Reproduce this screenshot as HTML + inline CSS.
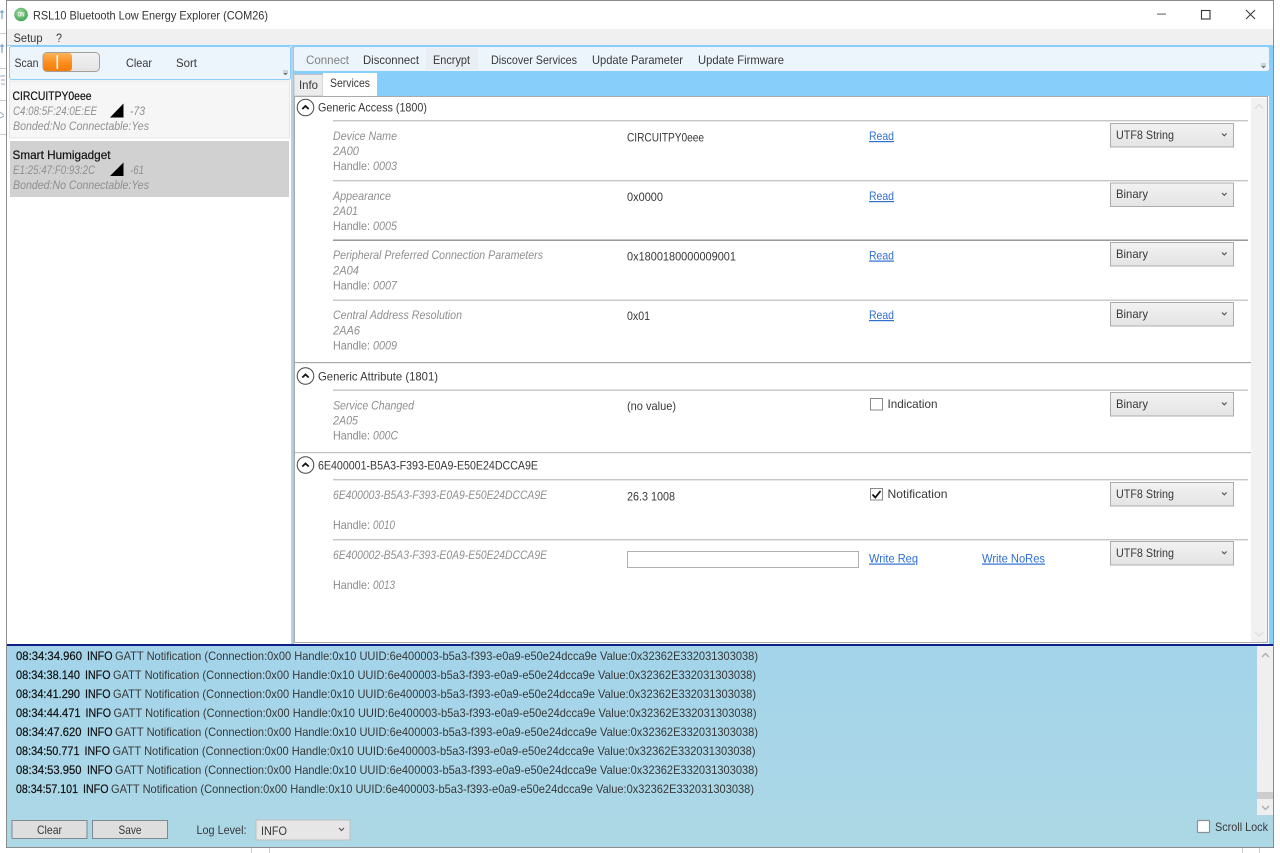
<!DOCTYPE html>
<html><head><meta charset="utf-8"><title>RSL10 Bluetooth Low Energy Explorer (COM26)</title>
<style>
html,body{margin:0;padding:0;background:#fff;width:1280px;height:853px;overflow:hidden}
svg{display:block}
text{font-family:"Liberation Sans",sans-serif;font-size:12px;fill:#2b2b2b}
.g{fill:#8a8a8a}
.i{fill:#8f8f8f;font-style:italic}
.d{fill:#383838}
.b{fill:#111;stroke:#111;stroke-width:.2}
.l{fill:#2f6fd0;text-decoration:underline}
</style></head><body>
<svg width="1280" height="853" viewBox="0 0 1280 853" xmlns="http://www.w3.org/2000/svg">
<defs>
<linearGradient id="og" x1="0" y1="0" x2="0" y2="1"><stop offset="0" stop-color="#fdb35a"/><stop offset=".55" stop-color="#fb8c1c"/><stop offset="1" stop-color="#f57c0a"/></linearGradient>
<linearGradient id="gr" x1="0" y1="0" x2="0" y2="1"><stop offset="0" stop-color="#f2f2f2"/><stop offset="1" stop-color="#e4e4e4"/></linearGradient>
<linearGradient id="lg" x1="0" y1="0" x2="0" y2="1"><stop offset="0" stop-color="#a3d4ea"/><stop offset="1" stop-color="#add8e6"/></linearGradient>
<radialGradient id="on" cx=".4" cy=".35" r=".7"><stop offset="0" stop-color="#9ad6a0"/><stop offset="1" stop-color="#3fa34d"/></radialGradient>
<symbol id="cb" viewBox="0 0 124 25" width="124" height="25"><rect x=".5" y=".5" width="123" height="23.500" fill="url(#gr)" stroke="#acacac"/><path d="M112 10.500l2.300 2.300 2.300-2.300" fill="none" stroke="#555" stroke-width="1.200"/></symbol>
<symbol id="ex" viewBox="0 0 20 20" width="20" height="20"><circle cx="10" cy="10" r="8.300" fill="#fff" stroke="#444" stroke-width="1"/><path d="M6.800 11.500L10 8.500l3.200 3" fill="none" stroke="#111" stroke-width="1.800"/></symbol>
</defs>

<!-- desktop behind -->
<rect width="1280" height="853" fill="#fff"/>
<rect x="0" y="33" width="6" height="1" fill="#ccc"/><rect x="0" y="68" width="6" height="1" fill="#ccc"/><rect x="0" y="100" width="6" height="1" fill="#ccc"/><rect x="0" y="134" width="6" height="1" fill="#ccc"/>
<path d="M0 12h4M2 10v9M0 46h4M2 44v9" stroke="#5a8fc4" fill="none"/>
<path d="M0 76h5M1 80h4M1 84h4M0 112l4 3M0 118l4-2" stroke="#9ab" fill="none"/>
<rect x="251" y="847" width="1" height="6" fill="#ccc"/><rect x="269" y="847" width="1" height="6" fill="#ccc"/><rect x="1242" y="847" width="1" height="6" fill="#ccc"/><rect x="1259" y="847" width="1" height="6" fill="#ccc"/>

<!-- window -->
<rect x="6.500" y=".5" width="1267" height="847" fill="#fff" stroke="#8c8c8c"/>
<rect x="7" y="1" width="1266" height="28" fill="#fff"/>
<circle cx="21" cy="14.500" r="6.800" fill="url(#on)"/>
<text x="17.500" y="16.500" textLength="7" lengthAdjust="spacingAndGlyphs" style="fill:#fff;font-size:6px;font-weight:bold">ON</text>
<text x="33" y="19.500" textLength="235" lengthAdjust="spacingAndGlyphs" style="fill:#333">RSL10 Bluetooth Low Energy Explorer (COM26)</text>
<rect x="1157" y="13.500" width="9" height="1.200" fill="#777"/>
<rect x="1201.500" y="10.500" width="8.500" height="8.500" fill="none" stroke="#333" stroke-width="1.100"/>
<path d="M1246 10l9 9M1255 10l-9 9" stroke="#333" stroke-width="1" fill="none"/>

<rect x="7" y="29" width="1266" height="16" fill="#f0f0f0"/>
<text x="13.500" y="42" textLength="29" lengthAdjust="spacingAndGlyphs" class="d">Setup</text>
<text x="56" y="42" textLength="6" lengthAdjust="spacingAndGlyphs" class="d">?</text>

<!-- blue region -->
<rect x="7" y="45" width="1266" height="600" fill="#88cefa"/>
<rect x="7" y="46" width="284" height="599" fill="#fff"/>
<rect x="291" y="46" width="2" height="599" fill="#b5d3e6"/>

<!-- left toolbar -->
<rect x="9.500" y="46.500" width="281" height="33" rx="2" fill="#ecf4fc" stroke="#8ccdf9"/>
<text x="14.500" y="67" textLength="24" lengthAdjust="spacingAndGlyphs" class="d">Scan</text>
<rect x="43" y="52.500" width="56.500" height="19" rx="4" fill="url(#gr)" stroke="#a59f97"/>
<rect x="43.500" y="53" width="28.500" height="18" rx="3" fill="url(#og)"/>
<rect x="56.500" y="55" width="1.600" height="14" fill="#fff"/>
<text x="126" y="67" textLength="26" lengthAdjust="spacingAndGlyphs" class="d">Clear</text>
<text x="176" y="67" textLength="21" lengthAdjust="spacingAndGlyphs" class="d">Sort</text>
<path d="M283 71h5M283.500 73h4l-2 2z" fill="#777" stroke="#777" stroke-width=".6"/>

<!-- list -->
<rect x="9.500" y="81" width="280" height="57" fill="#f6f6f6" stroke="#e6e6e6"/>
<rect x="10" y="141" width="279" height="56" fill="#d1d1d1"/>
<text x="12.500" y="100" textLength="79" lengthAdjust="spacingAndGlyphs" class="b">CIRCUITPY0eee</text>
<text x="13" y="115" textLength="84" lengthAdjust="spacingAndGlyphs" class="i">C4:08:5F:24:0E:EE</text>
<path d="M110 117.500L123.500 103.500V117.500Z" fill="#000"/>
<text x="130" y="115" textLength="15" lengthAdjust="spacingAndGlyphs" class="i">-73</text>
<text x="13" y="130" textLength="136" lengthAdjust="spacingAndGlyphs" class="i">Bonded:No Connectable:Yes</text>
<text x="12.500" y="159" textLength="98" lengthAdjust="spacingAndGlyphs" class="b">Smart Humigadget</text>
<text x="13" y="174" textLength="82" lengthAdjust="spacingAndGlyphs" class="i">E1:25:47:F0:93:2C</text>
<path d="M110 176L123.500 162.500V176Z" fill="#000"/>
<text x="130" y="174" textLength="14" lengthAdjust="spacingAndGlyphs" class="i">-61</text>
<text x="13" y="189" textLength="136" lengthAdjust="spacingAndGlyphs" class="i">Bonded:No Connectable:Yes</text>

<!-- right toolbar -->
<rect x="294" y="47" width="975" height="24" rx="2" fill="#ecf4fc"/>
<rect x="426" y="48" width="52" height="22" fill="#e8eef4"/>
<text x="306" y="64" textLength="43" lengthAdjust="spacingAndGlyphs" style="fill:#808080">Connect</text>
<text x="363" y="64" textLength="56" lengthAdjust="spacingAndGlyphs" class="d">Disconnect</text>
<text x="433" y="64" textLength="37" lengthAdjust="spacingAndGlyphs" class="d">Encrypt</text>
<text x="491" y="64" textLength="86" lengthAdjust="spacingAndGlyphs" class="d">Discover Services</text>
<text x="592" y="64" textLength="91" lengthAdjust="spacingAndGlyphs" class="d">Update Parameter</text>
<text x="698" y="64" textLength="86" lengthAdjust="spacingAndGlyphs" class="d">Update Firmware</text>
<path d="M1261 64h5M1261.500 66h4l-2 2z" fill="#777" stroke="#777" stroke-width=".6"/>

<!-- tabs -->
<rect x="294" y="74.500" width="29" height="21.500" fill="#ececec" stroke="#c2c2c2"/>
<text x="299" y="89" textLength="19" lengthAdjust="spacingAndGlyphs" class="d">Info</text>
<rect x="323" y="73" width="54" height="24" fill="#fff"/>
<text x="330" y="87" textLength="40" lengthAdjust="spacingAndGlyphs" class="d">Services</text>

<!-- content -->
<rect x="294" y="96" width="975" height="548" fill="#fff"/>
<rect x="1251" y="98" width="16" height="544" fill="#f1f1f1"/>
<rect x="294.500" y="96.500" width="973" height="546" fill="none" stroke="#555" stroke-dasharray="1 1"/>
<path d="M1255 108.500l4-4 4 4" stroke="#dcdcdc" fill="none" stroke-width="1.200"/>
<path d="M1255 632l4 4 4-4" stroke="#dcdcdc" fill="none" stroke-width="1.200"/>

<use href="#ex" x="295.500" y="97.500"/>
<text x="318" y="111.500" textLength="109" lengthAdjust="spacingAndGlyphs" class="d">Generic Access (1800)</text>
<rect x="333" y="120" width="915" height="1.400" fill="#c6c6c6"/>
<text x="333" y="140" textLength="64" lengthAdjust="spacingAndGlyphs" class="i">Device Name</text>
<text x="333" y="155" textLength="26" lengthAdjust="spacingAndGlyphs" class="i">2A00</text>
<text x="333" y="170" textLength="37" lengthAdjust="spacingAndGlyphs" class="g">Handle:</text><text x="373" y="170" textLength="24" lengthAdjust="spacingAndGlyphs" class="i">0003</text>
<text x="627" y="141.500" textLength="77" lengthAdjust="spacingAndGlyphs" class="d">CIRCUITPY0eee</text>
<text x="869" y="140" textLength="25" lengthAdjust="spacingAndGlyphs" class="l">Read</text>
<use href="#cb" x="1110" y="123"/><text x="1116" y="139" textLength="58" lengthAdjust="spacingAndGlyphs" class="d">UTF8 String</text>

<rect x="333" y="180" width="915" height="1.400" fill="#c6c6c6"/>
<text x="333" y="200" textLength="58" lengthAdjust="spacingAndGlyphs" class="i">Appearance</text>
<text x="333" y="215" textLength="25" lengthAdjust="spacingAndGlyphs" class="i">2A01</text>
<text x="333" y="230" textLength="37" lengthAdjust="spacingAndGlyphs" class="g">Handle:</text><text x="373" y="230" textLength="24" lengthAdjust="spacingAndGlyphs" class="i">0005</text>
<text x="627" y="201" textLength="36" lengthAdjust="spacingAndGlyphs" class="d">0x0000</text>
<text x="869" y="200" textLength="25" lengthAdjust="spacingAndGlyphs" class="l">Read</text>
<use href="#cb" x="1110" y="182.500"/><text x="1116" y="198" textLength="32" lengthAdjust="spacingAndGlyphs" class="d">Binary</text>

<rect x="333" y="239.500" width="915" height="1.400" fill="#8f8f8f"/>
<text x="333" y="259" textLength="210" lengthAdjust="spacingAndGlyphs" class="i">Peripheral Preferred Connection Parameters</text>
<text x="333" y="274.500" textLength="26" lengthAdjust="spacingAndGlyphs" class="i">2A04</text>
<text x="333" y="289.500" textLength="37" lengthAdjust="spacingAndGlyphs" class="g">Handle:</text><text x="373" y="289.500" textLength="24" lengthAdjust="spacingAndGlyphs" class="i">0007</text>
<text x="627" y="260.500" textLength="109" lengthAdjust="spacingAndGlyphs" class="d">0x1800180000009001</text>
<text x="869" y="259.500" textLength="25" lengthAdjust="spacingAndGlyphs" class="l">Read</text>
<use href="#cb" x="1110" y="242"/><text x="1116" y="258" textLength="32" lengthAdjust="spacingAndGlyphs" class="d">Binary</text>

<rect x="333" y="299.500" width="915" height="1.400" fill="#c6c6c6"/>
<text x="333" y="319" textLength="129" lengthAdjust="spacingAndGlyphs" class="i">Central Address Resolution</text>
<text x="333" y="334.500" textLength="27" lengthAdjust="spacingAndGlyphs" class="i">2AA6</text>
<text x="333" y="349.500" textLength="37" lengthAdjust="spacingAndGlyphs" class="g">Handle:</text><text x="373" y="349.500" textLength="24" lengthAdjust="spacingAndGlyphs" class="i">0009</text>
<text x="627" y="320" textLength="23" lengthAdjust="spacingAndGlyphs" class="d">0x01</text>
<text x="869" y="319" textLength="25" lengthAdjust="spacingAndGlyphs" class="l">Read</text>
<use href="#cb" x="1110" y="302"/><text x="1116" y="318" textLength="32" lengthAdjust="spacingAndGlyphs" class="d">Binary</text>

<rect x="295" y="362" width="956" height="1.200" fill="#a8a8a8"/>
<use href="#ex" x="295.500" y="366"/>
<text x="318" y="380.500" textLength="120" lengthAdjust="spacingAndGlyphs" class="d">Generic Attribute (1801)</text>
<rect x="333" y="389.500" width="915" height="1.400" fill="#c6c6c6"/>
<text x="333" y="409.500" textLength="81" lengthAdjust="spacingAndGlyphs" class="i">Service Changed</text>
<text x="333" y="424.500" textLength="25" lengthAdjust="spacingAndGlyphs" class="i">2A05</text>
<text x="333" y="439.500" textLength="37" lengthAdjust="spacingAndGlyphs" class="g">Handle:</text><text x="373" y="439.500" textLength="25" lengthAdjust="spacingAndGlyphs" class="i">000C</text>
<text x="627" y="410" textLength="49" lengthAdjust="spacingAndGlyphs" class="d">(no value)</text>
<rect x="870.500" y="398.500" width="12" height="11.500" fill="#fff" stroke="#8a8a8a"/>
<text x="887.500" y="408" textLength="50" lengthAdjust="spacingAndGlyphs" class="d">Indication</text>
<use href="#cb" x="1110" y="392"/><text x="1116" y="408" textLength="32" lengthAdjust="spacingAndGlyphs" class="d">Binary</text>

<rect x="295" y="452" width="956" height="1.200" fill="#c0c0c0"/>
<use href="#ex" x="295.500" y="455"/>
<text x="318" y="469.500" textLength="220" lengthAdjust="spacingAndGlyphs" class="d">6E400001-B5A3-F393-E0A9-E50E24DCCA9E</text>
<rect x="333" y="479" width="915" height="1.400" fill="#c6c6c6"/>
<text x="333" y="499" textLength="214" lengthAdjust="spacingAndGlyphs" class="i">6E400003-B5A3-F393-E0A9-E50E24DCCA9E</text>
<text x="333" y="529" textLength="37" lengthAdjust="spacingAndGlyphs" class="g">Handle:</text><text x="373" y="529" textLength="22" lengthAdjust="spacingAndGlyphs" class="i">0010</text>
<text x="627" y="500.500" textLength="48" lengthAdjust="spacingAndGlyphs" class="d">26.3 1008</text>
<rect x="870.500" y="488.500" width="12" height="11.500" fill="#fff" stroke="#8a8a8a"/>
<path d="M872.500 494.500l2.800 3 5.200-6.500" fill="none" stroke="#111" stroke-width="1.800"/>
<text x="887.500" y="498" textLength="60" lengthAdjust="spacingAndGlyphs" class="d">Notification</text>
<use href="#cb" x="1110" y="482"/><text x="1116" y="498" textLength="58" lengthAdjust="spacingAndGlyphs" class="d">UTF8 String</text>

<rect x="333" y="539" width="915" height="1.400" fill="#c6c6c6"/>
<text x="333" y="559" textLength="214" lengthAdjust="spacingAndGlyphs" class="i">6E400002-B5A3-F393-E0A9-E50E24DCCA9E</text>
<text x="333" y="589" textLength="37" lengthAdjust="spacingAndGlyphs" class="g">Handle:</text><text x="373" y="589" textLength="22" lengthAdjust="spacingAndGlyphs" class="i">0013</text>
<rect x="627.500" y="551.500" width="231" height="16" fill="#fff" stroke="#b0b0b0"/>
<text x="869" y="562.500" textLength="49" lengthAdjust="spacingAndGlyphs" class="l">Write Req</text>
<text x="982" y="562.500" textLength="63" lengthAdjust="spacingAndGlyphs" class="l">Write NoRes</text>
<use href="#cb" x="1110" y="541"/><text x="1116" y="557" textLength="58" lengthAdjust="spacingAndGlyphs" class="d">UTF8 String</text>

<!-- log -->
<rect x="7" y="645" width="1266" height="202" fill="url(#lg)"/>
<rect x="7" y="644" width="1266" height="2" fill="#0f1f8a"/>
<rect x="1257" y="646" width="16" height="169" fill="#efefef"/>
<rect x="1257" y="792" width="16" height="7" fill="#cdcdcd"/>
<path d="M1262 657l3.500-3.500 3.500 3.500" stroke="#aaa" fill="none" stroke-width="1.300"/>
<path d="M1262 806l3.500 3.500 3.500-3.500" stroke="#aaa" fill="none" stroke-width="1.300"/>

<text x="16" y="660" textLength="66" lengthAdjust="spacingAndGlyphs" class="b">08:34:34.960</text><text x="87" y="660" textLength="25.500" lengthAdjust="spacingAndGlyphs" class="b">INFO</text><text x="115" y="660" textLength="643" lengthAdjust="spacingAndGlyphs" class="d">GATT Notification (Connection:0x00 Handle:0x10 UUID:6e400003-b5a3-f393-e0a9-e50e24dcca9e Value:0x32362E332031303038)</text>
<text x="16" y="679" textLength="64" lengthAdjust="spacingAndGlyphs" class="b">08:34:38.140</text><text x="85" y="679" textLength="25.500" lengthAdjust="spacingAndGlyphs" class="b">INFO</text><text x="113" y="679" textLength="643" lengthAdjust="spacingAndGlyphs" class="d">GATT Notification (Connection:0x00 Handle:0x10 UUID:6e400003-b5a3-f393-e0a9-e50e24dcca9e Value:0x32362E332031303038)</text>
<text x="16" y="698" textLength="64" lengthAdjust="spacingAndGlyphs" class="b">08:34:41.290</text><text x="85" y="698" textLength="25.500" lengthAdjust="spacingAndGlyphs" class="b">INFO</text><text x="113" y="698" textLength="643" lengthAdjust="spacingAndGlyphs" class="d">GATT Notification (Connection:0x00 Handle:0x10 UUID:6e400003-b5a3-f393-e0a9-e50e24dcca9e Value:0x32362E332031303038)</text>
<text x="16" y="717" textLength="64.500" lengthAdjust="spacingAndGlyphs" class="b">08:34:44.471</text><text x="85.500" y="717" textLength="25.500" lengthAdjust="spacingAndGlyphs" class="b">INFO</text><text x="113.500" y="717" textLength="643" lengthAdjust="spacingAndGlyphs" class="d">GATT Notification (Connection:0x00 Handle:0x10 UUID:6e400003-b5a3-f393-e0a9-e50e24dcca9e Value:0x32362E332031303038)</text>
<text x="16" y="736" textLength="65.500" lengthAdjust="spacingAndGlyphs" class="b">08:34:47.620</text><text x="87" y="736" textLength="25.500" lengthAdjust="spacingAndGlyphs" class="b">INFO</text><text x="115" y="736" textLength="643" lengthAdjust="spacingAndGlyphs" class="d">GATT Notification (Connection:0x00 Handle:0x10 UUID:6e400003-b5a3-f393-e0a9-e50e24dcca9e Value:0x32362E332031303038)</text>
<text x="16" y="755" textLength="63.500" lengthAdjust="spacingAndGlyphs" class="b">08:34:50.771</text><text x="84.500" y="755" textLength="25.500" lengthAdjust="spacingAndGlyphs" class="b">INFO</text><text x="112.500" y="755" textLength="643" lengthAdjust="spacingAndGlyphs" class="d">GATT Notification (Connection:0x00 Handle:0x10 UUID:6e400003-b5a3-f393-e0a9-e50e24dcca9e Value:0x32362E332031303038)</text>
<text x="16" y="774" textLength="65.500" lengthAdjust="spacingAndGlyphs" class="b">08:34:53.950</text><text x="87" y="774" textLength="25.500" lengthAdjust="spacingAndGlyphs" class="b">INFO</text><text x="115" y="774" textLength="643" lengthAdjust="spacingAndGlyphs" class="d">GATT Notification (Connection:0x00 Handle:0x10 UUID:6e400003-b5a3-f393-e0a9-e50e24dcca9e Value:0x32362E332031303038)</text>
<text x="16" y="793" textLength="62" lengthAdjust="spacingAndGlyphs" class="b">08:34:57.101</text><text x="83" y="793" textLength="25.500" lengthAdjust="spacingAndGlyphs" class="b">INFO</text><text x="111" y="793" textLength="643" lengthAdjust="spacingAndGlyphs" class="d">GATT Notification (Connection:0x00 Handle:0x10 UUID:6e400003-b5a3-f393-e0a9-e50e24dcca9e Value:0x32362E332031303038)</text>

<rect x="12" y="820.500" width="75" height="18" fill="#dedede" stroke="#808890"/>
<text x="37" y="834" textLength="25" lengthAdjust="spacingAndGlyphs" class="d">Clear</text>
<rect x="92.500" y="820.500" width="75" height="18" fill="#dedede" stroke="#808890"/>
<text x="118.500" y="834" textLength="23" lengthAdjust="spacingAndGlyphs" class="d">Save</text>
<text x="196.500" y="834" textLength="50" lengthAdjust="spacingAndGlyphs" class="d">Log Level:</text>
<rect x="256" y="820" width="94" height="20" fill="#e6e6e6" stroke="#bdbdbd"/>
<text x="261" y="835" textLength="26" lengthAdjust="spacingAndGlyphs" class="d">INFO</text>
<path d="M339 828l2.500 2.500 2.500-2.500" fill="none" stroke="#555" stroke-width="1.200"/>
<rect x="1197.500" y="820.500" width="12" height="12" rx="1" fill="#fff" stroke="#8a9298" stroke-width="1.200"/>
<text x="1215" y="831" textLength="53" lengthAdjust="spacingAndGlyphs" class="d">Scroll Lock</text>
</svg>
</body></html>
